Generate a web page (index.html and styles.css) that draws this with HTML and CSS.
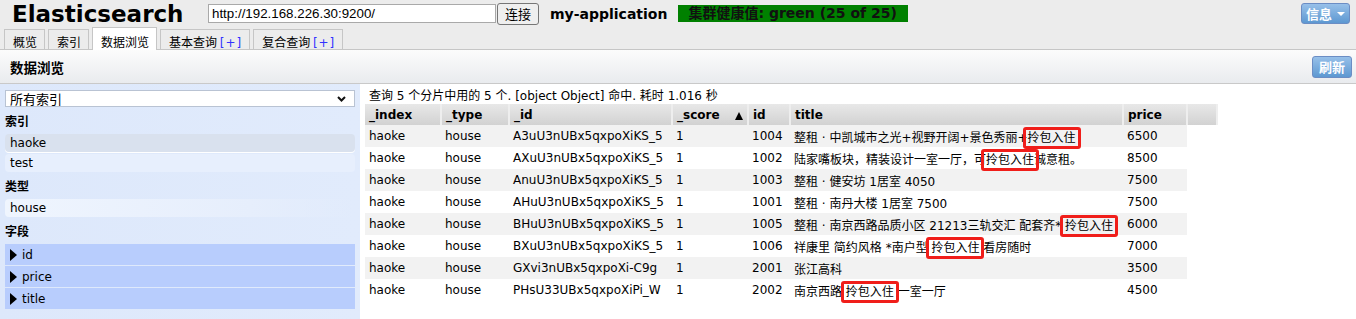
FILE: index.html
```html
<!DOCTYPE html>
<html lang="zh-CN">
<head>
<meta charset="utf-8">
<title>Elasticsearch</title>
<link rel="stylesheet" href="styles.css">
</head>
<body>
<header class="top">
  <div class="topbar">
    <h1 class="brand">Elasticsearch</h1>
    <input class="url" type="text" value="http://192.168.226.30:9200/">
    <button class="connect">连接</button>
    <span class="cluster">my-application</span>
    <span class="health">集群健康值: green (25 of 25)</span>
    <button class="btn-blue info">信息 <span class="caret"></span></button>
  </div>
  <nav class="tabs">
    <span class="tab">概览</span>
    <span class="tab">索引</span>
    <span class="tab active">数据浏览</span>
    <span class="tab">基本查询 <span class="plus">[+]</span></span>
    <span class="tab">复合查询 <span class="plus">[+]</span></span>
  </nav>
</header>
<section class="panel-head">
  <h2>数据浏览</h2>
  <button class="btn-blue refresh">刷新</button>
</section>
<div class="browser">
  <aside class="side">
    <div class="select-wrap">
      <select class="idx-select"><option>所有索引</option></select>
      <svg class="chev" width="9" height="6" viewBox="0 0 9 6"><path d="M1 1 L4.5 4.5 L8 1" fill="none" stroke="#111" stroke-width="2"/></svg>
    </div>
    <h3>索引</h3>
    <div class="item selected">haoke</div>
    <div class="item">test</div>
    <h3>类型</h3>
    <div class="item fade">house</div>
    <h3>字段</h3>
    <div class="field"><span class="tri"></span>id</div>
    <div class="field"><span class="tri"></span>price</div>
    <div class="field"><span class="tri"></span>title</div>
  </aside>
  <main class="results">
    <div class="status">查询 5 个分片中用的 5 个. [object Object] 命中. 耗时 1.016 秒</div>
    <table class="grid">
      <colgroup>
        <col class="c-index"><col class="c-type"><col class="c-id"><col class="c-score"><col class="c-num"><col class="c-title"><col class="c-price"><col class="c-pad">
      </colgroup>
      <thead>
        <tr><th>_index</th><th>_type</th><th>_id</th><th>_score <span class="sort"></span></th><th>id</th><th>title</th><th>price</th><th></th></tr>
      </thead>
      <tbody>
        <tr><td>haoke</td><td>house</td><td>A3uU3nUBx5qxpoXiKS_5</td><td>1</td><td>1004</td><td>整租 · 中凯城市之光+视野开阔+景色秀丽+<span class="mark">拎包入住</span></td><td>6500</td></tr>
        <tr><td>haoke</td><td>house</td><td>AXuU3nUBx5qxpoXiKS_5</td><td>1</td><td>1002</td><td>陆家嘴板块，精装设计一室一厅，可<span class="mark">拎包入住</span>诚意租。</td><td>8500</td></tr>
        <tr><td>haoke</td><td>house</td><td>AnuU3nUBx5qxpoXiKS_5</td><td>1</td><td>1003</td><td>整租 · 健安坊 1居室 4050</td><td>7500</td></tr>
        <tr><td>haoke</td><td>house</td><td>AHuU3nUBx5qxpoXiKS_5</td><td>1</td><td>1001</td><td>整租 · 南丹大楼 1居室 7500</td><td>7500</td></tr>
        <tr><td>haoke</td><td>house</td><td>BHuU3nUBx5qxpoXiKS_5</td><td>1</td><td>1005</td><td>整租 · 南京西路品质小区 21213三轨交汇 配套齐* <span class="mark">拎包入住</span></td><td>6000</td></tr>
        <tr><td>haoke</td><td>house</td><td>BXuU3nUBx5qxpoXiKS_5</td><td>1</td><td>1006</td><td>祥康里 简约风格 *南户型 <span class="mark">拎包入住</span> 看房随时</td><td>7000</td></tr>
        <tr><td>haoke</td><td>house</td><td>GXvi3nUBx5qxpoXi-C9g</td><td>1</td><td>2001</td><td>张江高科</td><td>3500</td></tr>
        <tr><td>haoke</td><td>house</td><td>PHsU33UBx5qxpoXiPi_W</td><td>1</td><td>2002</td><td>南京西路 <span class="mark">拎包入住</span> 一室一厅</td><td>4500</td></tr>
      </tbody>
    </table>
  </main>
</div>
</body>
</html>
```
FILE: styles.css
```css
html, body {
  margin: 0;
  padding: 0;
}
body {
  font-family: "DejaVu Sans", "Noto Sans CJK SC", sans-serif;
  font-size: 12px;
  color: #000;
  background: #fff;
  height: 319px;
  overflow: hidden;
}

/* ---------- top header ---------- */
.top {
  background: #ececec;
}
.topbar {
  display: flex;
  align-items: center;
  height: 27px;
  padding: 0 6px 0 12px;
}
.brand {
  margin: 0 27px 0 0;
  font-size: 23px;
  font-weight: bold;
  line-height: 26px;
  width: 169px;
  white-space: nowrap;
}
.url {
  box-sizing: border-box;
  width: 288px;
  height: 19px;
  margin: 0;
  padding: 0 3px;
  border: 1px solid #a9a9a9;
  background: #fff;
  font-family: "Liberation Sans", "Noto Sans CJK SC", sans-serif;
  font-size: 13.33px;
  color: #000;
}
.connect {
  box-sizing: border-box;
  height: 22px;
  width: 42px;
  margin: 0 0 0 1px;
  padding: 0;
  border: 1px solid #767676;
  border-radius: 3px;
  background: #efefef;
  font-family: "Noto Sans CJK SC", sans-serif;
  font-size: 13px;
  color: #000;
}
.cluster {
  margin-left: 11px;
  font-weight: bold;
  font-size: 14px;
  white-space: nowrap;
}
.health {
  margin-left: 11px;
  height: 17px;
  line-height: 17px;
  width: 230px;
  box-sizing: border-box;
  padding-left: 10px;
  background: #008000;
  color: #111;
  font-weight: bold;
  font-size: 14px;
  white-space: nowrap;
  overflow: hidden;
}
.btn-blue {
  box-sizing: border-box;
  height: 21px;
  padding: 0 6px;
  border: 1px solid #6b8dc4;
  border-radius: 3px;
  background: linear-gradient(#97c0e9, #5d98d1);
  color: #fff;
  font-family: "Noto Sans CJK SC", sans-serif;
  font-weight: bold;
  font-size: 13px;
  line-height: 18px;
  white-space: nowrap;
}
.info {
  margin-left: auto;
  width: 49px;
  padding: 0;
  display: flex;
  align-items: center;
  justify-content: center;
  gap: 5px;
}
.caret {
  flex: none;
  width: 0;
  height: 0;
  border-left: 4px solid transparent;
  border-right: 4px solid transparent;
  border-top: 4px solid #fff;
}

/* ---------- tabs ---------- */
.tabs {
  display: flex;
  align-items: flex-end;
  height: 22px;
  padding-left: 4px;
  border-bottom: 1px solid #c6c6c6;
}
.tab {
  box-sizing: border-box;
  height: 20px;
  padding: 4px 7px 0 8px;
  margin-right: 3px;
  border: 1px solid #c6c6c6;
  border-bottom: none;
  background: #ececec;
  font-family: "Noto Sans CJK SC", sans-serif;
  font-size: 12px;
  line-height: 15px;
  white-space: nowrap;
}
.tab.active {
  padding-top: 6px;
  margin-bottom: -1px;
  background: #fff;
  height: 23px;
}
.plus {
  font-family: "DejaVu Sans", sans-serif;
  color: #3333ff;
  letter-spacing: 1px;
}

/* ---------- panel head ---------- */
.panel-head {
  display: flex;
  align-items: center;
  height: 33px;
  padding: 0 4px 0 10px;
  background: linear-gradient(#fcfcfc, #e9ebee);
  border-bottom: 1px solid #c9c9c9;
}
.panel-head h2 {
  margin: 0;
  font-family: "Noto Sans CJK SC", sans-serif;
  font-size: 13.5px;
  font-weight: bold;
}
.refresh {
  margin-left: auto;
  width: 40px;
  height: 22px;
  padding: 0;
}

/* ---------- browser ---------- */
.browser {
  display: flex;
  height: 235px;
}
.side {
  box-sizing: border-box;
  width: 360px;
  flex: none;
  padding: 6px 5px 0 5px;
  background: linear-gradient(to right, #dde8fb, #e1ebfc);
}
.select-wrap {
  position: relative;
  width: 350px;
  height: 17px;
}
.idx-select {
  display: block;
  appearance: none;
  -webkit-appearance: none;
  box-sizing: border-box;
  width: 350px;
  height: 17px;
  margin: 0;
  padding: 0 20px 0 4px;
  border: 1px solid #b9c3d3;
  border-radius: 0;
  background: #fff;
  font-family: "Noto Sans CJK SC", sans-serif;
  font-size: 13px;
  line-height: 15px;
  color: #000;
}
.chev {
  position: absolute;
  right: 9px;
  top: 6px;
  pointer-events: none;
}
.side h3 {
  margin: 5px 0 4px;
  font-family: "Noto Sans CJK SC", sans-serif;
  font-size: 12px;
  font-weight: bold;
  line-height: 18px;
}
.item {
  height: 18px;
  line-height: 18px;
  padding: 0 5px;
  margin-bottom: 2px;
  border-radius: 4px;
  background: #e7effd;
  font-size: 12px;
}
.item.selected {
  background: #d9e1ee;
  box-shadow: 0 1px 0 #fff;
}
.item.fade {
  background: linear-gradient(to right, #eff5fe, #e6eefc 70%, rgba(224, 234, 252, 0));
}
.field {
  display: flex;
  align-items: center;
  height: 21px;
  margin-bottom: 1px;
  padding-left: 5px;
  background: #b8cdfd;
  font-size: 12px;
}
.tri {
  width: 0;
  height: 0;
  border-top: 6px solid transparent;
  border-bottom: 6px solid transparent;
  border-left: 7px solid #000;
  margin-right: 5px;
}

/* ---------- results ---------- */
.results {
  flex: 1;
  padding-left: 5px;
  min-width: 0;
}
.status {
  padding: 4px 0 0 4px;
  height: 16px;
  line-height: 16px;
  font-size: 12px;
  white-space: nowrap;
}
.grid {
  border-collapse: collapse;
  table-layout: fixed;
  width: 852px;
}
.c-index { width: 76px; }
.c-type { width: 68px; }
.c-id { width: 163px; }
.c-score { width: 76px; }
.c-num { width: 42px; }
.c-title { width: 333px; }
.c-price { width: 64px; }
.c-pad { width: 30px; }
.grid th {
  height: 21px;
  padding: 0 4px;
  text-align: left;
  font-weight: bold;
  font-size: 12px;
  background: linear-gradient(#e8e8e8, #d2d2d2);
  border-right: 2px solid #eeeeee;
  white-space: nowrap;
}
.sort {
  float: right;
  margin-top: 4px;
  width: 0;
  height: 0;
  border-left: 4px solid transparent;
  border-right: 4px solid transparent;
  border-bottom: 8px solid #000;
}
.grid td {
  height: 22px;
  padding: 0 4px;
  font-size: 12px;
  white-space: nowrap;
}
.grid tbody tr:nth-child(odd) td {
  background: #f2f2f2;
}
.mark {
  position: relative;
}
.mark::after {
  content: "";
  position: absolute;
  left: -5px;
  right: -5px;
  top: -4px;
  bottom: -4px;
  border: 3px solid #f01e1a;
  border-radius: 3px;
}
```
